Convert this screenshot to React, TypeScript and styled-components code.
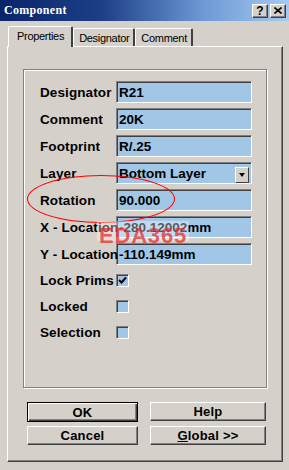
import React from 'react';
import styled, { createGlobalStyle } from 'styled-components';

const GlobalStyle = createGlobalStyle`
  html, body {
    margin: 0;
    padding: 0;
    background: #d5d0c9;
  }
  * {
    box-sizing: border-box;
  }
`;

const FACE = '#d5d0c9';
const FIELD = '#a2c6e6';

const Window = styled.div`
  position: relative;
  width: 289px;
  height: 470px;
  overflow: hidden;
  background: ${FACE};
  font-family: 'Liberation Sans', Arial, sans-serif;
  color: #000;
`;

const TitleBar = styled.div`
  height: 21px;
  display: flex;
  align-items: center;
  justify-content: space-between;
  padding: 0 3px 0 4px;
  background: linear-gradient(to right, #0a246a 0%, #1c3f86 35%, #6c98d4 70%, #a6caf0 100%);
`;

const Title = styled.span`
  font-family: 'Liberation Serif', 'Times New Roman', serif;
  font-weight: bold;
  font-size: 12px;
  color: #fff;
  letter-spacing: 0.3px;
`;

const TitleButtons = styled.div`
  display: flex;
  gap: 2px;
`;

const CaptionButton = styled.div`
  width: 16px;
  height: 14px;
  display: flex;
  align-items: center;
  justify-content: center;
  background: ${FACE};
  border-top: 1px solid #fff;
  border-left: 1px solid #fff;
  border-right: 1px solid #404040;
  border-bottom: 1px solid #404040;
  box-shadow: inset -1px -1px 0 #808080;
  font-size: 12px;
  font-weight: bold;
  line-height: 1;
`;

const Body = styled.div`
  padding: 5px 6px 0 7px;
`;

const TabStrip = styled.div`
  display: flex;
  align-items: flex-end;
  height: 20px;
  padding-left: 1px;
  position: relative;
  z-index: 1;
`;

const Tab = styled.div<{ $active?: boolean }>`
  height: ${(p) => (p.$active ? '21px' : '18px')};
  margin-bottom: ${(p) => (p.$active ? '-1px' : '0')};
  padding: ${(p) => (p.$active ? '3px 7px 0 8px' : '3px 4px 0 5px')};
  background: ${FACE};
  border-top: 1px solid #fff;
  border-left: 1px solid #fff;
  border-right: 2px solid #404040;
  border-radius: 2px 2px 0 0;
  font-size: 11px;
  letter-spacing: -0.3px;
  white-space: nowrap;
`;

const Panel = styled.div`
  width: 276px;
  height: 416px;
  padding: 22px 0 0 15px;
  border-top: 1px solid #fff;
  border-left: 1px solid #fff;
  border-right: 1px solid #404040;
  border-bottom: 1px solid #404040;
  box-shadow: inset -1px -1px 0 #808080;
`;

const GroupBox = styled.div`
  width: 244px;
  height: 319px;
  padding: 11px 0 0 16px;
  border: 1px solid #808080;
  box-shadow: inset 1px 1px 0 #fff, 1px 1px 0 #fff;
  display: flex;
  flex-direction: column;
  gap: 5px;
`;

const Row = styled.div<{ $check?: boolean }>`
  display: grid;
  grid-template-columns: 76px 136px;
  align-items: center;
  height: ${(p) => (p.$check ? '21px' : '22px')};
`;

const Label = styled.span`
  font-size: 13.5px;
  font-weight: bold;
  letter-spacing: 0.1px;
  white-space: nowrap;
  overflow: visible;
  position: relative;
  z-index: 1;
`;

const Field = styled.div`
  position: relative;
  height: 22px;
  display: flex;
  align-items: center;
  padding-left: 2px;
  background: ${FIELD};
  border-top: 1px solid #808080;
  border-left: 1px solid #808080;
  border-right: 1px solid #fff;
  border-bottom: 1px solid #fff;
  box-shadow: inset 1px 1px 0 #404040;
  font-size: 13.5px;
  font-weight: bold;
  white-space: nowrap;
`;

const DropButton = styled.div`
  position: absolute;
  right: 2px;
  top: 4px;
  width: 14px;
  height: 16px;
  display: flex;
  align-items: center;
  justify-content: center;
  background: ${FACE};
  border-top: 1px solid #fff;
  border-left: 1px solid #fff;
  border-right: 1px solid #404040;
  border-bottom: 1px solid #404040;
`;

const Arrow = styled.div`
  width: 0;
  height: 0;
  border-left: 3.5px solid transparent;
  border-right: 3.5px solid transparent;
  border-top: 4px solid #000;
`;

const CheckBox = styled.div`
  width: 13px;
  height: 13px;
  display: flex;
  align-items: center;
  justify-content: center;
  background: ${FIELD};
  border-top: 1px solid #808080;
  border-left: 1px solid #808080;
  border-right: 1px solid #fff;
  border-bottom: 1px solid #fff;
  box-shadow: inset 1px 1px 0 #404040;
`;

const Buttons = styled.div`
  display: grid;
  grid-template-columns: 111px 116px;
  column-gap: 12px;
  row-gap: 4px;
  margin: 14px 0 0 4px;
`;

const Button = styled.div<{ $default?: boolean }>`
  height: ${(p) => (p.$default ? '20px' : '19px')};
  display: flex;
  align-items: center;
  justify-content: center;
  background: ${FACE};
  border-top: 1px solid ${(p) => (p.$default ? '#000' : '#fff')};
  border-left: 1px solid ${(p) => (p.$default ? '#000' : '#fff')};
  border-right: 1px solid ${(p) => (p.$default ? '#000' : '#404040')};
  border-bottom: 1px solid ${(p) => (p.$default ? '#000' : '#404040')};
  box-shadow: ${(p) =>
    p.$default
      ? 'inset 1px 1px 0 #fff, inset -1px -1px 0 #404040, inset -2px -2px 0 #808080'
      : 'inset -1px -1px 0 #808080'};
  font-size: 13px;
  font-weight: bold;
  letter-spacing: 0.2px;
`;

const Ellipse = styled.div`
  position: absolute;
  left: 27px;
  top: 175px;
  width: 148px;
  height: 48px;
  border: 1px solid #f00;
  border-radius: 50%;
  pointer-events: none;
  z-index: 2;
`;

const Watermark = styled.div`
  position: absolute;
  left: 97px;
  top: 221px;
  width: 92px;
  height: 20px;
  background: rgba(255, 255, 255, 0.35);
  z-index: 3;
  pointer-events: none;
`;

const WatermarkText = styled.div`
  position: absolute;
  left: 2px;
  top: 2px;
  color: rgba(230, 40, 40, 0.72);
  font-family: 'Liberation Sans', Arial, sans-serif;
  font-size: 22px;
  font-weight: bold;
  line-height: 26px;
  letter-spacing: 0.8px;
  white-space: nowrap;
`;

const Check = () => (
  <svg width="9" height="9" viewBox="0 0 9 9">
    <path d="M1 4 L3.5 6.5 L8 1.5" stroke="#000" strokeWidth="2" fill="none" />
  </svg>
);

const fields: [string, string][] = [
  ['Designator', 'R21'],
  ['Comment', '20K'],
  ['Footprint', 'R/.25'],
];

export default function App() {
  return (
    <Window>
      <GlobalStyle />
      <TitleBar>
        <Title>Component</Title>
        <TitleButtons>
          <CaptionButton>?</CaptionButton>
          <CaptionButton>
            <svg width="8" height="7" viewBox="0 0 8 7">
              <path d="M0.5 0.5 L7.5 6.5 M7.5 0.5 L0.5 6.5" stroke="#000" strokeWidth="1.6" />
            </svg>
          </CaptionButton>
        </TitleButtons>
      </TitleBar>
      <Body>
        <TabStrip>
          <Tab $active>Properties</Tab>
          <Tab>Designator</Tab>
          <Tab>Comment</Tab>
        </TabStrip>
        <Panel>
          <GroupBox>
            {fields.map(([k, v]) => (
              <Row key={k}>
                <Label>{k}</Label>
                <Field>{v}</Field>
              </Row>
            ))}
            <Row>
              <Label>Layer</Label>
              <Field>
                Bottom Layer
                <DropButton>
                  <Arrow />
                </DropButton>
              </Field>
            </Row>
            <Row>
              <Label>Rotation</Label>
              <Field>90.000</Field>
            </Row>
            <Row>
              <Label>X - Location</Label>
              <Field>-280.12002mm</Field>
            </Row>
            <Row>
              <Label>Y - Location</Label>
              <Field>-110.149mm</Field>
            </Row>
            <Row $check>
              <Label>Lock Prims</Label>
              <CheckBox>
                <Check />
              </CheckBox>
            </Row>
            <Row $check>
              <Label>Locked</Label>
              <CheckBox />
            </Row>
            <Row $check>
              <Label>Selection</Label>
              <CheckBox />
            </Row>
          </GroupBox>
          <Buttons>
            <Button $default>OK</Button>
            <Button>Help</Button>
            <Button>Cancel</Button>
            <Button>
              <u>G</u>lobal &gt;&gt;
            </Button>
          </Buttons>
        </Panel>
      </Body>
      <Ellipse />
      <Watermark>
        <WatermarkText>EDA365</WatermarkText>
      </Watermark>
    </Window>
  );
}
